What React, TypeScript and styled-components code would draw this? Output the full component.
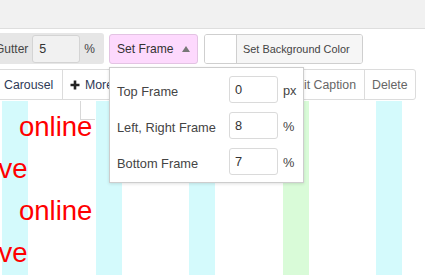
import React from "react";
import styled, { createGlobalStyle } from "styled-components";

const Global = createGlobalStyle`
  html, body { margin: 0; padding: 0; background: #fff; }
  body { font-family: "Liberation Sans", Arial, sans-serif; overflow: hidden; }
  #root { width: 425px; height: 275px; }
`;

const Page = styled.div`
  position: relative;
  width: 425px;
  height: 275px;
  overflow: hidden;
  background: #fff;
  color: #333;
`;

const TopBand = styled.div`
  height: 28px;
  background: #f1f1f1;
  border-bottom: 1px solid #dedede;
`;

const ToolRow = styled.div`
  display: flex;
  align-items: center;
  height: 31px;
  margin-top: 4px;
  margin-left: -13px;
`;

const GutterGroup = styled.div`
  display: flex;
  align-items: center;
  height: 31px;
  box-sizing: border-box;
  padding: 0 9px 0 8px;
  background: #e6e6e6;
  border-radius: 3px;
  font-size: 12px;
  color: #444;
`;

const GutterInput = styled.div`
  width: 48px;
  height: 28px;
  box-sizing: border-box;
  margin: 0 4px 0 4px;
  padding: 0 6px;
  display: flex;
  align-items: center;
  background: #f1f1f1;
  border: 1px solid #d4d4d4;
  border-radius: 3px;
  font-size: 12.5px;
  color: #333;
`;

const FrameButton = styled.div`
  display: flex;
  align-items: center;
  width: 89px;
  height: 30px;
  box-sizing: border-box;
  margin-left: 5px;
  padding-left: 7px;
  background: #fdd9fd;
  border: 1px solid #e3c3e3;
  border-radius: 3px;
  font-size: 12.1px;
  color: #333;
`;

const Caret = styled.span`
  margin-left: 8px;
  width: 0;
  height: 0;
  border-left: 4px solid transparent;
  border-right: 4px solid transparent;
  border-bottom: 6px solid #777;
`;

const ColorGroup = styled.div`
  display: flex;
  height: 30px;
  margin-left: 6px;
  box-sizing: border-box;
  border: 1px solid #cfcfcf;
  border-radius: 3px;
  overflow: hidden;
`;

const Swatch = styled.div`
  width: 31px;
  background: #fff;
  border-right: 1px solid #cfcfcf;
`;

const ColorButton = styled.div`
  display: flex;
  align-items: center;
  width: 125px;
  box-sizing: border-box;
  padding-left: 6px;
  background: #f6f6f6;
  font-size: 10.9px;
  color: #444;
`;

const ActionRow = styled.div`
  display: flex;
  margin-top: 5px;
  margin-left: -5px;
`;

const ActionGroup = styled.div`
  display: flex;
  height: 31px;
  box-sizing: border-box;
  border: 1px solid #dcdcdc;
  border-radius: 3px;
  background: #fff;
`;

const ActionButton = styled.div<{ $w: number; $pad?: number; $first?: boolean; $muted?: boolean }>`
  display: flex;
  align-items: center;
  width: ${(p) => p.$w}px;
  box-sizing: border-box;
  padding-left: ${(p) => p.$pad ?? 7}px;
  border-left: ${(p) => (p.$first ? "none" : "1px solid #dcdcdc")};
  font-size: 12.3px;
  color: ${(p) => (p.$muted ? "#666" : "#2e3a57")};
  white-space: nowrap;
`;

const PlusIcon = styled.svg`
  margin-right: 5px;
`;

const Content = styled.div`
  position: relative;
  display: grid;
  margin-top: 1px;
  height: 175px;
  overflow: hidden;
`;

const Stripes = styled.div`
  grid-area: 1 / 1;
  display: flex;
  padding-left: 2px;
`;

const Column = styled.div`
  width: 93.5px;
  flex: none;
`;

const Strip = styled.div<{ $green?: boolean }>`
  width: 26px;
  height: 100%;
  background: ${(p) => (p.$green ? "#d9fbd8" : "#d4fafc")};
`;

const TextLayer = styled.div`
  grid-area: 1 / 1;
  padding-top: 5px;
`;

const BigLine = styled.div<{ $indent: number }>`
  margin-left: ${(p) => p.$indent}px;
  font-size: 27.5px;
  line-height: 42px;
  color: #ff0000;
  white-space: nowrap;
`;

const Handle = styled.div`
  position: absolute;
  left: 80px;
  top: 0;
  width: 14px;
  height: 18px;
  background: #fff;
  border-left: 1px solid #d8d8d8;
  border-bottom: 1px solid #d8d8d8;
`;

const Popup = styled.div`
  position: absolute;
  left: 109px;
  top: 67px;
  width: 195px;
  height: 116px;
  box-sizing: border-box;
  padding: 8px 0 0 7px;
  background: #fff;
  border: 1px solid #cdcdcd;
  box-shadow: 0 1px 3px rgba(0, 0, 0, 0.12);
  display: flex;
  flex-direction: column;
  gap: 9px;
`;

const FieldRow = styled.div`
  display: grid;
  grid-template-columns: 112px 49px auto;
  align-items: center;
  height: 27px;
`;

const FieldLabel = styled.span`
  padding-top: 3px;
  font-size: 12.8px;
  color: #444;
  white-space: nowrap;
`;

const FieldInput = styled.div`
  height: 27px;
  box-sizing: border-box;
  padding-left: 5px;
  display: flex;
  align-items: center;
  border: 1px solid #dadada;
  border-radius: 3px;
  font-size: 12.8px;
  color: #333;
`;

const Unit = styled.span`
  margin-left: 5px;
  padding-top: 2px;
  font-size: 12.8px;
  color: #444;
`;

const fields = [
  { label: "Top Frame", value: "0", unit: "px" },
  { label: "Left, Right Frame", value: "8", unit: "%" },
  { label: "Bottom Frame", value: "7", unit: "%" },
];

const lines = [
  { text: "online", indent: 19 },
  { text: "Live", indent: -23 },
  { text: "online", indent: 19 },
  { text: "Live", indent: -23 },
];

export default function App() {
  return (
    <Page>
      <Global />
      <TopBand />
      <ToolRow>
        <GutterGroup>
          Gutter
          <GutterInput>5</GutterInput>%
        </GutterGroup>
        <FrameButton>
          Set Frame
          <Caret />
        </FrameButton>
        <ColorGroup>
          <Swatch />
          <ColorButton>Set Background Color</ColorButton>
        </ColorGroup>
      </ToolRow>
      <ActionRow>
        <ActionGroup>
          <ActionButton $w={66} $pad={8} $first>
            Carousel
          </ActionButton>
          <ActionButton $w={60}>
            <PlusIcon width="10" height="10" viewBox="0 0 10 10">
              <path d="M5 0.5v9M0.5 5h9" stroke="#222" strokeWidth="2.6" />
            </PlusIcon>
            More
          </ActionButton>
          <ActionButton $w={161}>Edit Image</ActionButton>
          <ActionButton $w={81} $pad={5} $muted>
            Edit Caption
          </ActionButton>
          <ActionButton $w={51} $muted>
            Delete
          </ActionButton>
        </ActionGroup>
      </ActionRow>
      <Content>
        <Stripes>
          <Column><Strip /></Column>
          <Column><Strip /></Column>
          <Column><Strip /></Column>
          <Column><Strip $green /></Column>
          <Column><Strip /></Column>
        </Stripes>
        <TextLayer>
          {lines.map((l, i) => (
            <BigLine key={i} $indent={l.indent}>
              {l.text}
            </BigLine>
          ))}
        </TextLayer>
        <Handle />
      </Content>
      <Popup>
        {fields.map((f) => (
          <FieldRow key={f.label}>
            <FieldLabel>{f.label}</FieldLabel>
            <FieldInput>{f.value}</FieldInput>
            <Unit>{f.unit}</Unit>
          </FieldRow>
        ))}
      </Popup>
    </Page>
  );
}
